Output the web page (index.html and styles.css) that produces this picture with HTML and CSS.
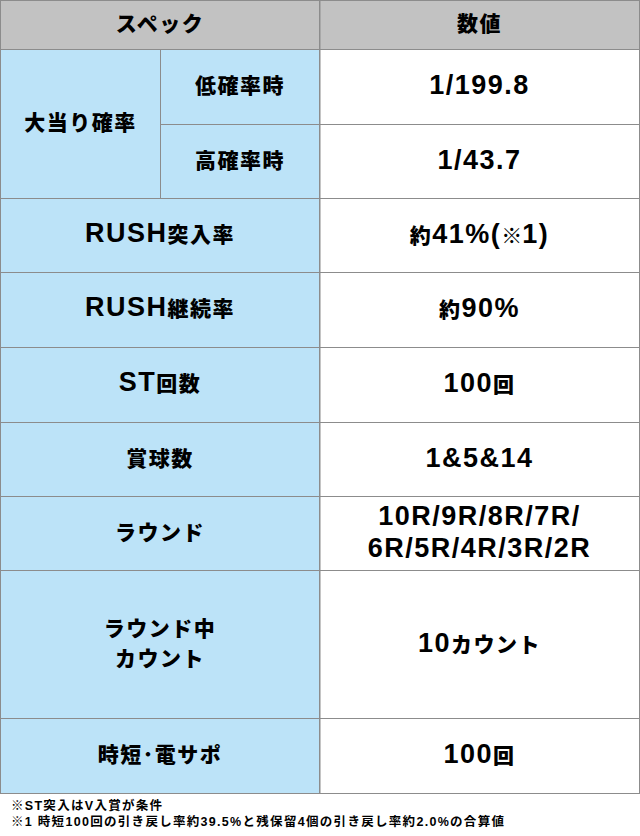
FILE: index.html
```html
<!DOCTYPE html>
<html lang="ja">
<head>
<meta charset="utf-8">
<title>スペック</title>
<link rel="stylesheet" href="styles.css">
</head>
<body>
<div class="spec">
  <div class="cell head wide"><p class="txt"><span class="jp">スペック</span></p></div>
  <div class="cell head value-col"><p class="txt"><span class="jp">数値</span></p></div>

  <div class="cell label tall"><p class="txt"><span class="jp">大当り確率</span></p></div>
  <div class="cell label"><p class="txt"><span class="jp">低確率時</span></p></div>
  <div class="cell value"><p class="txt"><span class="num">1/199.8</span></p></div>
  <div class="cell label"><p class="txt"><span class="jp">高確率時</span></p></div>
  <div class="cell value"><p class="txt"><span class="num">1/43.7</span></p></div>

  <div class="cell label wide"><p class="txt"><span class="num">RUSH</span><span class="jp">突入率</span></p></div>
  <div class="cell value"><p class="txt"><span class="jp">約</span><span class="num">41%(</span><span class="jp tight">※</span><span class="num">1)</span></p></div>

  <div class="cell label wide"><p class="txt"><span class="num">RUSH</span><span class="jp">継続率</span></p></div>
  <div class="cell value"><p class="txt"><span class="jp">約</span><span class="num">90%</span></p></div>

  <div class="cell label wide"><p class="txt"><span class="num">ST</span><span class="jp">回数</span></p></div>
  <div class="cell value"><p class="txt"><span class="num">100</span><span class="jp">回</span></p></div>

  <div class="cell label wide"><p class="txt"><span class="jp">賞球数</span></p></div>
  <div class="cell value"><p class="txt"><span class="num">1&amp;5&amp;14</span></p></div>

  <div class="cell label wide"><p class="txt"><span class="jp">ラウンド</span></p></div>
  <div class="cell value"><p class="txt"><span class="num">10R/9R/8R/7R/</span><br><span class="num">6R/5R/4R/3R/2R</span></p></div>

  <div class="cell label wide"><p class="txt two"><span class="jp">ラウンド中</span><br><span class="jp">カウント</span></p></div>
  <div class="cell value"><p class="txt"><span class="num">10</span><span class="jp">カウント</span></p></div>

  <div class="cell label wide"><p class="txt"><span class="jp">時短･電サポ</span></p></div>
  <div class="cell value"><p class="txt"><span class="num">100</span><span class="jp">回</span></p></div>
</div>
<div class="notes">
  <p>※ST突入はV入賞が条件</p>
  <p>※1 時短100回の引き戻し率約39.5%と残保留4個の引き戻し率約2.0%の合算値</p>
</div>
</body>
</html>
```
FILE: styles.css
```css
body {
  margin: 0;
  background: #ffffff;
  color: #000000;
  font-family: "Liberation Sans", "Noto Sans CJK JP", sans-serif;
  font-weight: bold;
}

.spec {
  display: grid;
  grid-template-columns: 159px 158px 319px;
  grid-template-rows: 48px 74px 73px 73px 74px 74px 73px 73px 147px 74px;
  gap: 1px;
  padding: 1px;
  width: 640px;
  box-sizing: border-box;
  background: #8c8c8c;
}

.cell {
  display: flex;
  align-items: center;
  justify-content: center;
  text-align: center;
}

.txt {
  margin: 0;
  line-height: 28px;
}

.two {
  line-height: 26px;
}

.head {
  background: #c2c2c2;
  padding-bottom: 2px;
}

.label {
  background: #bce3f8;
  padding-bottom: 2px;
}

.value {
  background: #ffffff;
  box-shadow: inset 1px 0 0 #c4c4c4;
}

.value-col {
  box-shadow: inset 1px 0 0 #a8a8a8;
}

.wide {
  grid-column: span 2;
}

.tall {
  grid-row: span 2;
}

.jp {
  font-family: "Noto Sans CJK JP", sans-serif;
  font-weight: 900;
  font-size: 21px;
  letter-spacing: 1.5px;
}

.tight {
  letter-spacing: 0;
}

.num {
  font-family: "Liberation Sans", sans-serif;
  font-weight: bold;
  font-size: 27px;
  letter-spacing: 1.5px;
}

.notes {
  padding: 4px 0 0 11px;
  font-family: "Liberation Sans", "Noto Sans CJK JP", sans-serif;
  font-weight: bold;
  font-size: 12.5px;
  line-height: 16px;
  letter-spacing: 1.3px;
}

.notes p {
  margin: 0;
}
```
